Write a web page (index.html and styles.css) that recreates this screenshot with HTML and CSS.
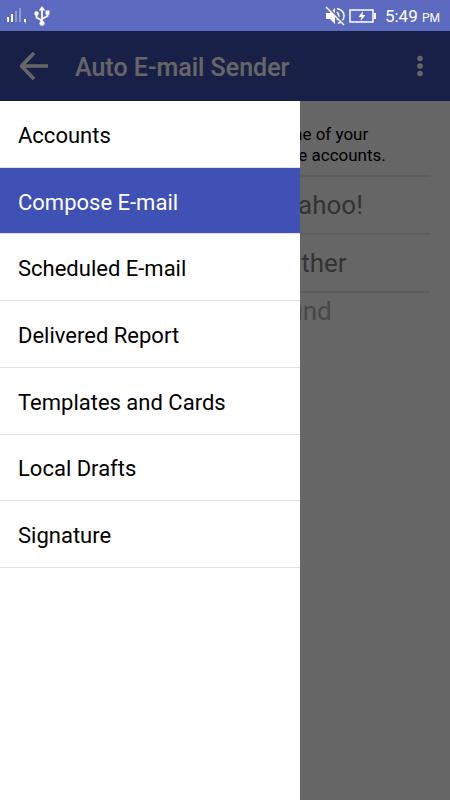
FILE: index.html
```html
<!DOCTYPE html>
<html lang="en">
<head>
<meta charset="utf-8">
<meta name="viewport" content="width=device-width, initial-scale=1">
<title>Auto E-mail Sender</title>
<link rel="stylesheet" href="styles.css">
</head>
<body>
<div class="status">
  <svg class="signal" width="22" height="17" viewBox="0 0 22 17" aria-hidden="true">
    <path d="M1 10h2v5H1zM5 7h2v8H5z" fill="#fff"/>
    <path d="M9 4h2v11H9zM13 1h2v14h-2z" fill="#8e99d4"/>
    <path d="M18 12h2v3l-1 2v-2h-1z" fill="#fff"/>
  </svg>
  <svg class="usb" width="16" height="20" viewBox="0 0 16 20" aria-hidden="true">
    <path d="M8 3v14M8 14.500L2.500 11.500V7M8 13l5.500-3V6" fill="none" stroke="#fff" stroke-width="1.800"/>
    <path d="M8 0l3.200 4.500H4.800z" fill="#fff"/>
    <circle cx="2.500" cy="7.500" r="2.200" fill="#fff"/>
    <path d="M11.500 4.500h4v4h-4z" fill="#fff"/>
    <circle cx="8" cy="17.200" r="2.500" fill="#fff"/>
  </svg>
  <svg class="mute" width="20" height="20" viewBox="0 0 20 20" aria-hidden="true">
    <path d="M1 7h4l5-5v16l-5-5H1z" fill="#fff"/>
    <path d="M12 6q3.500 4 0 8M12 2.500q7.500 2 7 8-.5 5-6 7" fill="none" stroke="#fff" stroke-width="1.500"/>
    <path d="M2 .5L20 18.500" stroke="#5c6bc0" stroke-width="2"/>
    <path d="M1 1l18 18" stroke="#fff" stroke-width="1.400"/>
  </svg>
  <svg class="battery" width="27" height="14" viewBox="0 0 27 14" aria-hidden="true">
    <path d="M1 1h23v12H1z" fill="none" stroke="#fff" stroke-width="1.500"/>
    <path d="M25 4h2v6h-2z" fill="#fff"/>
    <path d="M14 2L9.500 8h3l-1 4 5-6h-3z" fill="#fff"/>
  </svg>
  <span class="time">5:49 <span class="meridiem">PM</span></span>
</div>
<div class="screen">
  <header class="appbar">
    <button class="icon-button" type="button" aria-label="Back">
      <svg width="28" height="28" viewBox="0 0 28 28" aria-hidden="true">
        <path d="M14 1L1.500 14 14 27M2 14h26" fill="none" stroke="#fff" stroke-width="3.600"/>
      </svg>
    </button>
    <h1 class="title">Auto E-mail Sender</h1>
    <button class="icon-button" type="button" aria-label="More options">
      <svg width="6" height="22" viewBox="0 0 6 22" aria-hidden="true">
        <g fill="#fff"><circle cx="3" cy="3.500" r="2.800"/><circle cx="3" cy="11" r="2.800"/><circle cx="3" cy="18.500" r="2.800"/></g>
      </svg>
    </button>
  </header>
  <main class="content">
    <p class="intro">one of your<br>the accounts.</p>
    <p class="account">Yahoo!</p>
    <p class="account">Other</p>
    <p class="empty">und</p>
  </main>
  <div class="scrim"></div>
  <nav class="drawer">
    <ul class="menu">
      <li><a class="item" href="#">Accounts</a></li>
      <li><a class="item selected" href="#">Compose E-mail</a></li>
      <li><a class="item" href="#">Scheduled E-mail</a></li>
      <li><a class="item" href="#">Delivered Report</a></li>
      <li><a class="item" href="#">Templates and Cards</a></li>
      <li><a class="item" href="#">Local Drafts</a></li>
      <li><a class="item" href="#">Signature</a></li>
    </ul>
  </nav>
</div>
</body>
</html>
```
FILE: styles.css
```css
* {
  box-sizing: border-box;
}

body {
  display: flex;
  flex-direction: column;
  min-height: 100vh;
  margin: 0;
  font-family: Roboto, sans-serif;
  color: #000;
}

.status {
  display: flex;
  align-items: center;
  height: 31px;
  padding: 0 10px 0 6px;
  background: #5c6bc0;
  color: #fff;
}

.usb {
  margin-left: 6px;
}

.mute {
  margin-left: auto;
}

.battery {
  margin: 0 9px 0 4px;
}

.time {
  font-size: 17px;
}

.meridiem {
  font-size: 12px;
}

.screen {
  position: relative;
  flex: 1;
  background: #fff;
}

.appbar {
  display: flex;
  align-items: center;
  height: 70px;
  padding: 0 23px 0 16px;
  background: #3f51b5;
  color: #fff;
}

.icon-button {
  display: flex;
  justify-content: center;
  padding: 4px;
  border: 0;
  background: none;
}

.title {
  flex: 1;
  margin: 0 0 0 23px;
  padding-top: 2px;
  font-size: 25px;
  font-weight: 500;
}

.content {
  padding: 23px 20px 0;
}

.content p {
  margin: 0;
  padding-left: calc(200% / 3 - 10px);
}

.content .intro {
  padding-bottom: 9px;
  border-bottom: 2px solid #ebebeb;
  font-size: 17px;
  line-height: 21px;
}

.account {
  border-bottom: 2px solid #ebebeb;
  color: #808080;
  font-size: 26px;
  line-height: 56px;
}

.content .empty {
  padding-left: calc(200% / 3 - 5px);
  color: #b4b4b4;
  font-size: 26px;
  line-height: 36px;
}

.scrim {
  position: absolute;
  inset: 0;
  background: rgba(0, 0, 0, 0.6);
}

.drawer {
  position: absolute;
  top: 70px;
  bottom: 0;
  left: 0;
  width: calc(200% / 3);
  background: #fff;
}

.menu {
  display: grid;
  grid-auto-rows: 1fr;
  min-height: 467px;
  margin: 0;
  padding: 0;
  list-style: none;
}

.menu li {
  display: grid;
  border-bottom: 1px solid #e0e0e0;
}

.item {
  display: flex;
  align-items: center;
  padding: 3px 18px 0;
  color: #000;
  font-size: 22px;
  text-decoration: none;
}

.selected {
  background: #3f51b5;
  color: #fff;
}
```
